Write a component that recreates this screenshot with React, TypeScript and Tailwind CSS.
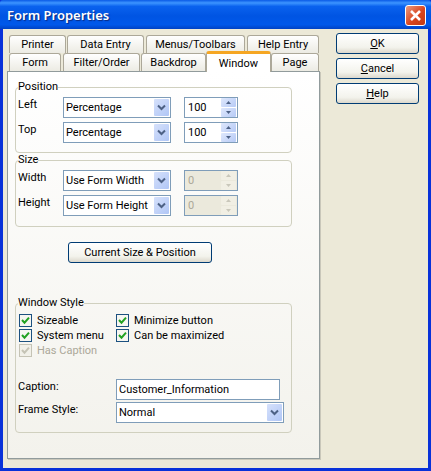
import React from 'react';

const font = 'font-["Roboto",Tahoma,sans-serif]';

const Chevron = () => (
  <svg width="9" height="7" viewBox="0 0 9 7" className="text-[#4d6185]">
    <path d="M1 1.5 L4.5 5 L8 1.5" fill="none" stroke="currentColor" strokeWidth="2" />
  </svg>
);

const Select = ({ value, className }: { value: string; className: string }) => (
  <div className={`flex h-[21px] items-center justify-between border border-[#7f9db9] bg-white pl-[2px] pr-[1px] ${className}`}>
    <span className="whitespace-nowrap text-[11px] leading-none text-black">{value}</span>
    <span className="flex h-[17px] w-[15px] items-center justify-center rounded-[1px] bg-[linear-gradient(135deg,#d6e1fb,#b0c6f6)]">
      <Chevron />
    </span>
  </div>
);

const Spin = ({ value, disabled }: { value: string; disabled?: boolean }) => (
  <div className={`flex h-[21px] w-[54px] items-center justify-between border border-[#7f9db9] pl-[3px] pr-[1px] ${disabled ? 'bg-[#ebe9dc]' : 'bg-white'}`}>
    <span className={`text-[11px] leading-none ${disabled ? 'text-[#aca899]' : 'text-black'}`}>{value}</span>
    <span className="flex flex-col gap-[1px]">
      {[0, 1].map((i) => (
        <span
          key={i}
          className={`flex h-[9px] w-[15px] items-center justify-center rounded-[1px] ${disabled ? 'bg-[#f1efe4]' : 'bg-[linear-gradient(135deg,#dfe8fc,#b6caf6)]'}`}
        >
          <svg width="5" height="3" viewBox="0 0 5 3" className={disabled ? 'text-[#c9c7ba]' : 'text-[#4d6185]'}>
            <path d={i === 0 ? 'M2.5 0 L5 3 L0 3 Z' : 'M0 0 L5 0 L2.5 3 Z'} fill="currentColor" />
          </svg>
        </span>
      ))}
    </span>
  </div>
);

const Check = ({ label, disabled }: { label: string; disabled?: boolean }) => (
  <div className="flex h-[15px] items-center gap-[5px]">
    <span className={`flex h-[13px] w-[13px] items-center justify-center border ${disabled ? 'border-[#c5c3b5] bg-[#f1f0e9]' : 'border-[#1c5180] bg-[#f6f6f1]'}`}>
      <svg width="9" height="9" viewBox="0 0 9 9" className={disabled ? 'text-[#c5c3b5]' : 'text-[#21a121]'}>
        <path d="M1 4 L3.5 6.7 L8 1.6" fill="none" stroke="currentColor" strokeWidth="2" />
      </svg>
    </span>
    <span className={`whitespace-nowrap text-[11px] leading-none ${disabled ? 'text-[#aca899]' : 'text-black'}`}>{label}</span>
  </div>
);

const Button = ({ className, children }: { className: string; children: React.ReactNode }) => (
  <button className={`flex h-[21px] items-center justify-center rounded-[3px] border border-[#003c74] bg-[linear-gradient(180deg,#ffffff,#f3f3ec_70%,#dcd8cc)] text-[11px] leading-none text-black ${className}`}>
    {children}
  </button>
);

const Tab = ({ label, className }: { label: string; className: string }) => (
  <div className={`flex h-[18px] items-center justify-center rounded-t-[3px] border border-b-0 border-[#aca899] bg-[linear-gradient(180deg,#ffffff,#ecebe3)] text-[11px] leading-none text-black ${className}`}>
    {label}
  </div>
);

const Group = ({ label, className, children }: { label: string; className: string; children: React.ReactNode }) => (
  <fieldset className={`mx-[7px] w-[277px] rounded-[4px] border border-[#d0d0bf] ${className}`}>
    <legend className="ml-[2px] h-[14px] text-[11px] leading-[14px] text-black">{label}</legend>
    {children}
  </fieldset>
);

const Row = ({ label, children }: { label: string; children: React.ReactNode }) => (
  <div className="flex h-[25px] items-start">
    <span className="ml-[2px] w-[45px] text-[11px] leading-[15px] text-black">{label}</span>
    {children}
  </div>
);

export default function App() {
  return (
    <div className={`flex h-[471px] w-[431px] flex-col overflow-hidden bg-[#0831d9] ${font}`}>
      {/* title bar */}
      <div className="flex h-[29px] items-center justify-between rounded-t-[3px] bg-[linear-gradient(180deg,#0a5ae6_0%,#3d95ff_10%,#0a62ee_22%,#0054e3_55%,#0058ea_85%,#0042c4_100%)] pl-[7px] pr-[5px] pt-[2px]">
        <span className="font-['Noto_Sans',sans-serif] text-[13px] font-semibold text-white [text-shadow:1px_1px_1px_#0a2a80]">Form Properties</span>
        <span className="flex h-[21px] w-[21px] items-center justify-center rounded-[3px] border border-white bg-[linear-gradient(135deg,#ea9b80,#d9451e_55%,#c13a12)]">
          <svg width="13" height="13" viewBox="0 0 13 13">
            <path d="M2 2 L11 11 M11 2 L2 11" stroke="white" strokeWidth="2.6" />
          </svg>
        </span>
      </div>

      {/* client area */}
      <div className="mx-[3px] mb-[3px] flex flex-1 gap-[16px] bg-[#ece9d8] pl-[4px]">
        <div className="w-[313px] pt-[6px]">
          <div className="ml-[2px] flex h-[18px]">
            <Tab label="Printer" className="w-[57px]" />
            <Tab label="Data Entry" className="ml-[1px] w-[77px]" />
            <Tab label="Menus/Toolbars" className="ml-[2px] w-[99px]" />
            <Tab label="Help Entry" className="ml-[2px] w-[72px]" />
          </div>
          <div className="ml-[2px] flex h-[18px]">
            <Tab label="Form" className="w-[52px]" />
            <Tab label="Filter/Order" className="ml-[2px] w-[77px]" />
            <Tab label="Backdrop" className="ml-[1px] w-[65px]" />
            <div className="relative z-10 -mt-[2px] flex h-[21px] w-[65px] items-center justify-center rounded-t-[3px] border-x border-[#aca899] border-t-[3px] border-t-[#f5a623] bg-white text-[11px] leading-none text-black">
              Window
            </div>
            <Tab label="Page" className="w-[48px]" />
          </div>
          <div className="h-[388px] border border-[#919b9c] bg-[linear-gradient(180deg,#ffffff,#f3f2ec)] pt-[8px] shadow-[1px_1px_0_#c9c7ba]">
            <Group label="Position" className="h-[73px]">
              <div className="pt-[3px]">
                <Row label="Left">
                  <Select value="Percentage" className="w-[108px]" />
                  <span className="ml-[13px]">
                    <Spin value="100" />
                  </span>
                </Row>
                <Row label="Top">
                  <Select value="Percentage" className="w-[108px]" />
                  <span className="ml-[13px]">
                    <Spin value="100" />
                  </span>
                </Row>
              </div>
            </Group>
            <Group label="Size" className="h-[74px]">
              <div className="pt-[3px]">
                <Row label="Width">
                  <Select value="Use Form Width" className="w-[108px]" />
                  <span className="ml-[13px]">
                    <Spin value="0" disabled />
                  </span>
                </Row>
                <Row label="Height">
                  <Select value="Use Form Height" className="w-[108px]" />
                  <span className="ml-[13px]">
                    <Spin value="0" disabled />
                  </span>
                </Row>
              </div>
            </Group>
            <Button className="ml-[60px] mt-[15px] w-[144px]">Current Size &amp; Position</Button>
            <Group label="Window Style" className="mt-[33px] h-[137px]">
              <div className="flex pl-[3px] pt-[3px]">
                <div className="w-[97px]">
                  <Check label="Sizeable" />
                  <Check label="System menu" />
                  <Check label="Has Caption" disabled />
                </div>
                <div>
                  <Check label="Minimize button" />
                  <Check label="Can be maximized" />
                </div>
              </div>
              <div className="mt-[21px] flex h-[23px] items-start">
                <span className="ml-[2px] w-[98px] text-[11px] leading-[15px] text-black">Caption:</span>
                <div className="flex h-[21px] w-[164px] items-center border border-[#7f9db9] bg-white pl-[2px] text-[11px] leading-none text-black">
                  Customer_Information
                </div>
              </div>
              <div className="flex items-start">
                <span className="ml-[2px] w-[98px] text-[11px] leading-[15px] text-black">Frame Style:</span>
                <Select value="Normal" className="w-[168px]" />
              </div>
            </Group>
          </div>
        </div>

        <div className="flex flex-col gap-[4px] pt-[4px]">
          <Button className="w-[83px]"><span><span className="underline">O</span>K</span></Button>
          <Button className="w-[83px]"><span><span className="underline">C</span>ancel</span></Button>
          <Button className="w-[83px]"><span><span className="underline">H</span>elp</span></Button>
        </div>
      </div>
    </div>
  );
}
